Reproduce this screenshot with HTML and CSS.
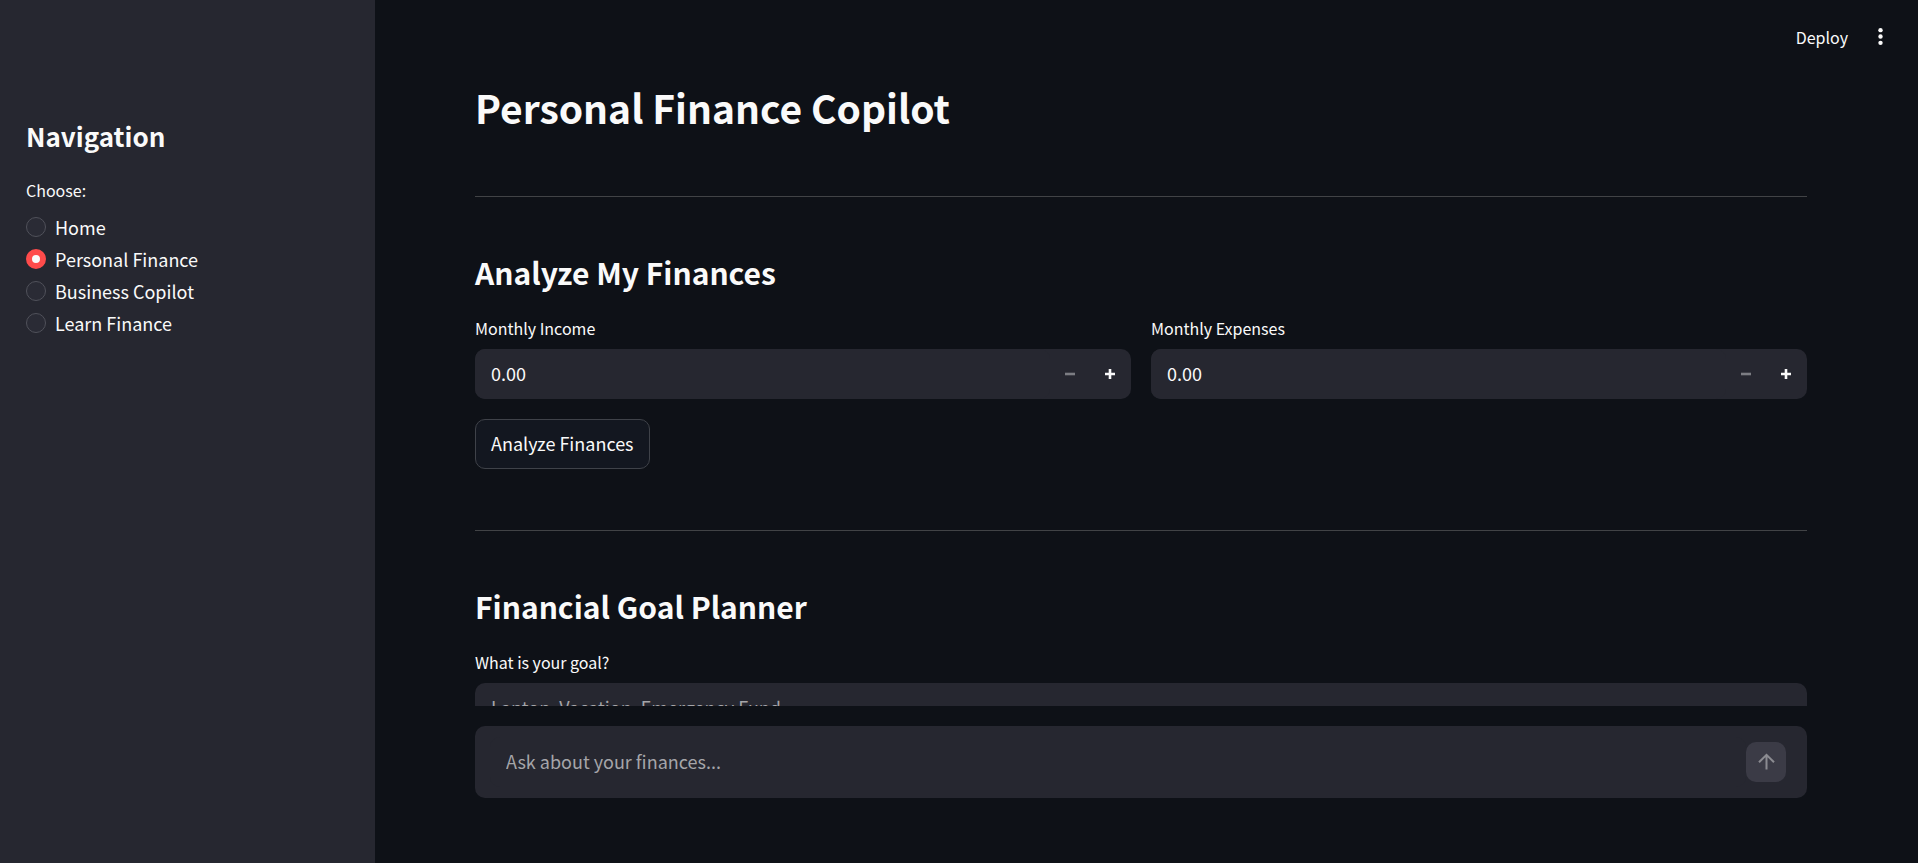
FILE: index.html
```html
<!DOCTYPE html>
<html lang="en">
<head>
<meta charset="utf-8">
<meta name="viewport" content="width=device-width, initial-scale=1">
<title>Personal Finance Copilot</title>
<link rel="stylesheet" href="styles.css">
</head>
<body>
<div class="app">
  <aside class="sidebar">
    <h2 class="sidebar-title">Navigation</h2>
    <fieldset class="radio-group">
      <legend class="label">Choose:</legend>
      <label class="radio"><input type="radio" name="page">Home</label>
      <label class="radio"><input type="radio" name="page" checked>Personal Finance</label>
      <label class="radio"><input type="radio" name="page">Business Copilot</label>
      <label class="radio"><input type="radio" name="page">Learn Finance</label>
    </fieldset>
  </aside>

  <div class="page">
    <header class="toolbar">
      <button class="toolbar-button" type="button">Deploy</button>
      <button class="toolbar-button menu-button" type="button" aria-label="Main menu">
        <svg class="icon-menu" viewBox="0 0 24 24" aria-hidden="true"><circle cx="12" cy="5.9" r="2.1"/><circle cx="12" cy="12" r="2.1"/><circle cx="12" cy="18.1" r="2.1"/></svg>
      </button>
    </header>

    <main class="content">
      <h1 class="title">Personal Finance Copilot</h1>
      <hr class="divider">
      <section class="section">
        <h2 class="heading">Analyze My Finances</h2>
        <div class="columns">
          <div class="field">
            <label class="label" for="income">Monthly Income</label>
            <div class="number">
              <input class="input" id="income" type="text" inputmode="decimal" value="0.00">
              <button class="step" type="button" aria-label="Decrease income" disabled><svg class="icon-step" viewBox="0 0 10 10" aria-hidden="true"><path d="M0 3.7h10v2.6H0z"/></svg></button>
              <button class="step" type="button" aria-label="Increase income"><svg class="icon-step" viewBox="0 0 10 10" aria-hidden="true"><path d="M3.7 0h2.6v3.7H10v2.6H6.3V10H3.7V6.3H0V3.7h3.7z"/></svg></button>
            </div>
          </div>
          <div class="field">
            <label class="label" for="expenses">Monthly Expenses</label>
            <div class="number">
              <input class="input" id="expenses" type="text" inputmode="decimal" value="0.00">
              <button class="step" type="button" aria-label="Decrease expenses" disabled><svg class="icon-step" viewBox="0 0 10 10" aria-hidden="true"><path d="M0 3.7h10v2.6H0z"/></svg></button>
              <button class="step" type="button" aria-label="Increase expenses"><svg class="icon-step" viewBox="0 0 10 10" aria-hidden="true"><path d="M3.7 0h2.6v3.7H10v2.6H6.3V10H3.7V6.3H0V3.7h3.7z"/></svg></button>
            </div>
          </div>
        </div>
        <button class="button" type="button">Analyze Finances</button>
      </section>
      <hr class="divider">
      <section class="section">
        <h2 class="heading">Financial Goal Planner</h2>
        <div class="field">
          <label class="label" for="goal">What is your goal?</label>
          <input class="input goal-input" id="goal" type="text" placeholder="Laptop, Vacation, Emergency Fund">
        </div>
      </section>
    </main>

    <footer class="chat-bar">
      <form class="chat">
        <input class="input chat-input" type="text" aria-label="Ask about your finances" placeholder="Ask about your finances...">
        <button class="send" type="submit" aria-label="Send message" disabled>
          <svg class="icon-send" viewBox="0 0 20 20" aria-hidden="true"><path d="M10.5 17.5V3M3 10.3L10.5 2.8L18 10.3"/></svg>
        </button>
      </form>
    </footer>
  </div>
</div>
</body>
</html>
```
FILE: styles.css
```css
* {
  box-sizing: border-box;
}

body {
  margin: 0;
  background: #0e1117;
  color: #fafafa;
  font: 18px/30px "Noto Sans CJK SC", "Noto Sans", sans-serif;
}

button,
input {
  font: inherit;
  color: inherit;
}

.app {
  display: flex;
  height: 100vh;
}

.sidebar {
  flex: 0 0 375px;
  padding: 115px 26px 0;
  background: #262730;
}

.sidebar-title {
  margin: 0 0 20px;
  font-size: 26px;
  font-weight: 600;
  line-height: 42px;
}

.radio-group {
  margin: 0;
  padding: 0;
  border: 0;
}

.label {
  display: block;
  padding: 0;
  margin-bottom: 8px;
  font-size: 16px;
  line-height: 26px;
}

.radio {
  display: flex;
  align-items: center;
  gap: 9px;
  height: 32px;
}

.radio input {
  appearance: none;
  width: 20px;
  height: 20px;
  margin: 0;
  border: 1px solid #50515a;
  border-radius: 50%;
  background: #2a2b35;
}

.radio input:checked {
  border: 6px solid #ff4b4b;
  background: #fafafa;
}

.page {
  flex: 1;
  min-width: 0;
  display: flex;
  flex-direction: column;
}

.toolbar {
  display: flex;
  justify-content: flex-end;
  align-items: center;
  gap: 20px;
  height: 73px;
  padding-right: 25px;
}

.toolbar-button {
  padding: 0;
  border: 0;
  background: none;
  font-size: 16px;
}

.menu-button {
  display: flex;
  justify-content: center;
  width: 25px;
}

.icon-menu {
  width: 25px;
  height: 25px;
  fill: currentColor;
}

.content {
  flex: 1;
  min-height: 0;
  overflow: hidden;
  padding: 0 111px 0 100px;
}

.title {
  margin: 0;
  padding-bottom: 4px;
  font-size: 39px;
  font-weight: 600;
  line-height: 68px;
}

.divider {
  height: 1px;
  margin: 51px 0 50px;
  border: 0;
  background: #414346;
}

.section {
  padding-bottom: 10px;
}

.heading {
  margin: 0 0 18px;
  font-size: 30px;
  font-weight: 600;
  line-height: 50px;
}

.columns {
  display: grid;
  grid-template-columns: 1fr 1fr;
  gap: 20px;
  margin-bottom: 20px;
}

.number {
  display: flex;
  padding-right: 1px;
  border-radius: 10px;
  background: #262730;
}

.input {
  flex: 1;
  min-width: 0;
  height: 50px;
  padding: 0 16px 2px;
  border: 0;
  border-radius: 10px;
  background: #262730;
}

.input::placeholder {
  color: #a5a5a9;
  opacity: 1;
}

.step {
  display: flex;
  justify-content: center;
  align-items: center;
  width: 40px;
  padding: 0;
  border: 0;
  background: none;
}

.step:disabled {
  color: #7c7d83;
}

.icon-step {
  width: 10px;
  height: 10px;
  fill: currentColor;
}

.button {
  display: block;
  height: 50px;
  padding: 0 15px 2px;
  border: 1px solid #3f4249;
  border-radius: 10px;
  background: #131720;
}

.goal-input {
  width: 100%;
}

.chat-bar {
  padding: 20px 111px 65px 100px;
}

.chat {
  display: flex;
  align-items: center;
  padding: 11px 21px 11px 15px;
  border-radius: 10px;
  background: #262730;
}

.send {
  display: flex;
  justify-content: center;
  align-items: center;
  width: 40px;
  height: 40px;
  padding: 0;
  border: 0;
  border-radius: 10px;
  background: #3b3b46;
  color: #8b8b91;
}

.icon-send {
  width: 20px;
  height: 20px;
  fill: none;
  stroke: currentColor;
  stroke-width: 2;
}
```
